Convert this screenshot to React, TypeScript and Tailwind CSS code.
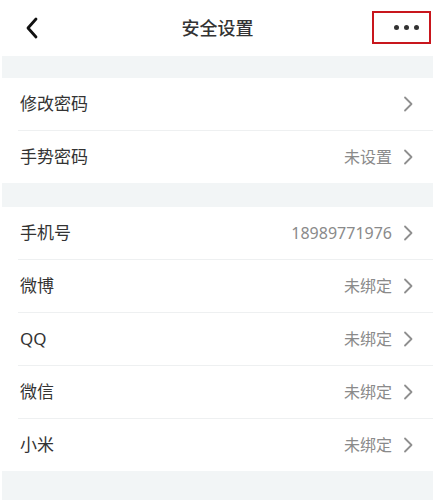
import React from "react";

const font = { fontFamily: '"Noto Sans", "Noto Sans CJK SC", sans-serif' };

function Chevron() {
  return (
    <svg width="11" height="16" viewBox="0 0 11 16" fill="none" className="shrink-0">
      <path d="M2 1.5 L8.5 8 L2 14.5" stroke="#8f8f8f" strokeWidth="1.8" strokeLinecap="round" strokeLinejoin="round" />
    </svg>
  );
}

function Row({ label, value }: { label: string; value?: string }) {
  return (
    <div className="flex h-[52px] items-center justify-between pl-[20px] pr-[21px]">
      <span className="text-[17px] text-[#333333]">{label}</span>
      <div className="flex items-center gap-[11px]">
        {value && <span className="text-[16px] text-[#8a8a8a]">{value}</span>}
        <Chevron />
      </div>
    </div>
  );
}

function Group({ items }: { items: { label: string; value?: string }[] }) {
  return (
    <div className="bg-white">
      {items.map((it, i) => (
        <div key={it.label}>
          {i > 0 && <div className="ml-[18px] mr-[2px] h-px bg-[#eef0f1]" />}
          <Row label={it.label} value={it.value} />
        </div>
      ))}
    </div>
  );
}

export default function App() {
  return (
    <div className="h-[500px] w-[435px] overflow-hidden bg-white" style={font}>
      <div className="relative grid h-[56px] grid-cols-[1fr_auto_1fr] items-center">
        <div className="pl-[25px]">
          <svg width="14" height="22" viewBox="0 0 14 22" fill="none">
            <path d="M11 2 L3 11 L11 20" stroke="#111111" strokeWidth="2.8" strokeLinecap="round" strokeLinejoin="round" />
          </svg>
        </div>
        <div className="text-[18px] font-medium text-[#333333]">安全设置</div>
        <div />
        <div className="absolute left-[372px] top-[11px] flex h-[33px] w-[59px] items-center justify-end gap-[5px] border-[2.5px] border-[#c8161d] pr-[10px]">
          <span className="h-[5px] w-[5px] rounded-full bg-[#333]" />
          <span className="h-[5px] w-[5px] rounded-full bg-[#333]" />
          <span className="h-[5px] w-[5px] rounded-full bg-[#333]" />
        </div>
      </div>
      <div className="mx-[2px] h-[22px] bg-[#f2f5f6]" />
      <Group items={[{ label: "修改密码" }, { label: "手势密码", value: "未设置" }]} />
      <div className="mx-[2px] h-[24px] bg-[#f2f5f6]" />
      <Group
        items={[
          { label: "手机号", value: "18989771976" },
          { label: "微博", value: "未绑定" },
          { label: "QQ", value: "未绑定" },
          { label: "微信", value: "未绑定" },
          { label: "小米", value: "未绑定" },
        ]}
      />
      <div className="mx-[2px] h-[40px] bg-[#f2f5f6]" />
    </div>
  );
}
